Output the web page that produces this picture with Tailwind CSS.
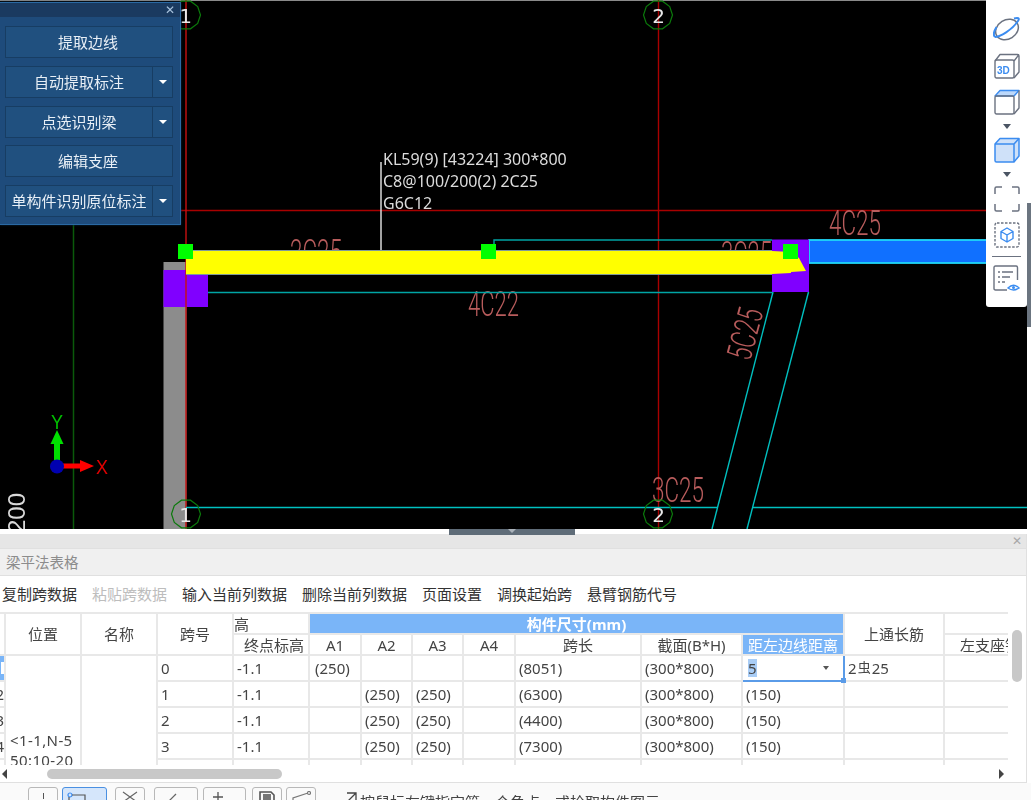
<!DOCTYPE html>
<html lang="zh-CN">
<head>
    <meta charset="UTF-8">
    <title>梁平法表格</title>
    <script src="https://cdn.jsdelivr.net/npm/@tailwindcss/browser@4"></script>
</head>
<body class="overflow-hidden bg-white">
<div class="flex flex-col h-[800px] w-[1031px] overflow-hidden blur-[0.35px] text-[15px] leading-5 text-[#333] font-['Noto_Sans','Noto_Sans_CJK_SC',sans-serif]">

    <!-- drawing canvas -->
    <div class="relative h-[529px] shrink-0 bg-white">
        <svg class="block bg-black" width="1027" height="529" viewBox="0 0 1027 529" xmlns="http://www.w3.org/2000/svg">
            <defs>
                <polygon id="axis-ring" fill="none" stroke="#0b7a0b" stroke-width="1.2" points="14.5,0 11.7,8.5 4.5,13.8 -4.5,13.8 -11.7,8.5 -14.5,0 -11.7,-8.5 -4.5,-13.8 4.5,-13.8 11.7,-8.5"/>
            </defs>
            <rect x="0" y="0" width="1027" height="1" fill="#8a8a8a"/>
            <line x1="73.5" y1="224" x2="73.5" y2="529" stroke="#0a5a0a" stroke-width="1.5"/>

            <!-- axis lines -->
            <line x1="180" y1="210.5" x2="986" y2="210.5" stroke="#a80000" stroke-width="1.4"/>
            <line x1="658.5" y1="0" x2="658.5" y2="529" stroke="#a80000" stroke-width="1.4"/>

            <!-- column and supports -->
            <rect x="163.5" y="262" width="23" height="267" fill="#8c8c8c"/>
            <rect x="163.5" y="270" width="23" height="37" fill="#8000ff"/>
            <rect x="186" y="273" width="22" height="34" fill="#8000ff"/>
            <line x1="186" y1="0" x2="186" y2="529" stroke="#c81010" stroke-width="1.4"/>

            <!-- labels under the beam -->
            <g fill="#b85c5c" font-family="Roboto, sans-serif" font-weight="300" font-size="35">
                <text x="290" y="264" textLength="52" lengthAdjust="spacingAndGlyphs">2C25</text>
                <text x="721" y="266" textLength="51" lengthAdjust="spacingAndGlyphs">3C25</text>
                <text x="468" y="316" textLength="51" lengthAdjust="spacingAndGlyphs">4C22</text>
                <text x="829" y="235" textLength="52" lengthAdjust="spacingAndGlyphs">4C25</text>
                <text x="652" y="502" textLength="52" lengthAdjust="spacingAndGlyphs">3C25</text>
                <text x="0" y="0" textLength="52" lengthAdjust="spacingAndGlyphs" transform="translate(750,362) rotate(-75)">5C25</text>
            </g>

            <!-- teal outlines -->
            <g stroke="#00c0c0" stroke-width="1.4" fill="none">
                <path d="M494 245V240H772" stroke="#00a4a4"/>
                <line x1="208" y1="292.5" x2="772" y2="292.5" stroke="#00a4a4"/>
                <line x1="186" y1="507.5" x2="718" y2="507.5"/>
                <line x1="753" y1="507.5" x2="1027" y2="507.5"/>
                <line x1="773" y1="292" x2="712" y2="529"/>
                <line x1="808.5" y1="292" x2="747" y2="529"/>
            </g>

            <!-- right beam -->
            <rect x="809" y="240" width="180" height="23" fill="#1070ff" stroke="#20d8f8" stroke-width="1.8"/>

            <!-- selected beam -->
            <rect x="772" y="239.5" width="37" height="52.5" fill="#8000ff"/>
            <rect x="186" y="250" width="586" height="25" fill="#7f9a9a"/>
            <polygon points="186,251 772,251 791,252 799,258 806,271 791,272 791,273 772,274 186,274" fill="#ffff00"/>
            <line x1="381" y1="162" x2="381" y2="250" stroke="#d8d8d8" stroke-width="1.5"/>
            <rect x="178" y="244" width="15" height="15" fill="#00ff00"/>
            <rect x="481" y="244" width="15" height="15" fill="#00ff00"/>
            <rect x="783" y="244" width="15" height="15" fill="#00ff00"/>

            <!-- beam annotation -->
            <g fill="#dcdcdc" font-family="'Noto Sans', sans-serif" font-size="16">
                <text x="383" y="165">KL59(9) [43224] 300*800</text>
                <text x="383" y="187">C8@100/200(2) 2C25</text>
                <text x="383" y="209">G6C12</text>
            </g>

            <!-- axis rings -->
            <use href="#axis-ring" x="186" y="15"/>
            <use href="#axis-ring" x="658" y="15"/>
            <use href="#axis-ring" x="186" y="514"/>
            <use href="#axis-ring" x="658" y="514"/>
            <g fill="#e8e8e8" font-family="'DejaVu Sans', sans-serif" font-size="20" text-anchor="middle">
                <text x="185.5" y="23">1</text>
                <text x="658.5" y="23">2</text>
                <text x="185.5" y="522">1</text>
                <text x="658.5" y="522">2</text>
            </g>

            <!-- UCS -->
            <rect x="54" y="442" width="6" height="20" fill="#00e000"/>
            <polygon points="57,430 63.5,444 50.5,444" fill="#00e000"/>
            <rect x="62" y="463.5" width="20" height="5" fill="#ff0000"/>
            <polygon points="94,466 80,460 80,472" fill="#ff0000"/>
            <circle cx="57" cy="466.5" r="7" fill="#0000b0"/>
            <text x="57" y="429" text-anchor="middle" fill="#00c000" font-family="'Liberation Sans', sans-serif" font-size="20" textLength="12" lengthAdjust="spacingAndGlyphs">Y</text>
            <text x="96" y="474" fill="#e00000" font-family="'Liberation Sans', sans-serif" font-size="20" textLength="12" lengthAdjust="spacingAndGlyphs">X</text>
            <text x="0" y="0" transform="translate(25,533) rotate(-90)" fill="#d8d8d8" font-family="'Liberation Sans', sans-serif" font-size="24">200</text>
        </svg>

        <!-- floating tool panel -->
        <div class="absolute left-0 top-[2px] w-[181px] h-[223px] bg-[#1e4b7b] border border-l-0 border-[#2a69a3] shadow-[0_0_2px_#0a2a4a] flex flex-col">
            <div class="h-[14px] bg-[#1a3a60] flex items-center justify-end pr-[5px] text-[#a9c4de] text-[12px] leading-none">✕</div>
            <div class="flex flex-col gap-[8px] pl-[5px] pr-[7px] pt-[9px] text-[15px] text-[#e8eff6]">
                <div class="h-[32px] flex items-center justify-center pr-[2px] bg-[#20507f] border border-[#173d63]">提取边线</div>
                <div class="h-[32px] flex bg-[#20507f] border border-[#173d63]">
                    <div class="flex-1 flex items-center justify-center">自动提取标注</div>
                    <div class="w-[20px] border-l border-[#173d63] flex items-center justify-center"><div class="w-0 h-0 border-x-[4px] border-x-transparent border-t-[4px] border-t-white"></div></div>
                </div>
                <div class="h-[32px] flex bg-[#20507f] border border-[#173d63]">
                    <div class="flex-1 flex items-center justify-center">点选识别梁</div>
                    <div class="w-[20px] border-l border-[#173d63] flex items-center justify-center"><div class="w-0 h-0 border-x-[4px] border-x-transparent border-t-[4px] border-t-white"></div></div>
                </div>
                <div class="h-[32px] -mt-px flex items-center justify-center pr-[2px] bg-[#20507f] border border-[#173d63]">编辑支座</div>
                <div class="h-[32px] flex bg-[#20507f] border border-[#173d63]">
                    <div class="flex-1 flex items-center justify-center">单构件识别原位标注</div>
                    <div class="w-[20px] border-l border-[#173d63] flex items-center justify-center"><div class="w-0 h-0 border-x-[4px] border-x-transparent border-t-[4px] border-t-white"></div></div>
                </div>
            </div>
        </div>

        <!-- view toolbar -->
        <div class="absolute left-[986px] top-0 w-[41px] h-[307px] bg-white rounded-b-[3px] flex flex-col items-center pt-[17px]">
            <svg width="28" height="25" viewBox="0 0 28 25" fill="none" stroke-width="1.5">
                <ellipse cx="14" cy="12.5" rx="12" ry="9.5" transform="rotate(-32 14 12.5)" stroke="#6b7280"/>
                <path d="M2 20C7 20 19 13 25 4C27 1 25 0.5 21 1.5" stroke="#3b8cf0" stroke-width="2"/>
                <path d="M2 20C0 18 1 14 3.5 10" stroke="#3b8cf0" stroke-width="2"/>
            </svg>
            <svg class="mt-[11px]" width="26" height="26" viewBox="0 0 26 26" fill="none" stroke="#6b7280" stroke-width="1.4" stroke-linejoin="round">
                <rect x="1" y="7" width="19" height="18" rx="1.5"/>
                <path d="M1 8L6 1.500H23.500Q25 1.500 25 3V19L20 25M20 8L25 1.500"/>
                <text x="3" y="21" fill="#3b8cf0" stroke="none" font-family="'Liberation Sans', sans-serif" font-weight="700" font-size="10">3D</text>
            </svg>
            <svg class="mt-[10px]" width="26" height="26" viewBox="0 0 26 26" fill="none" stroke="#6b7280" stroke-width="1.4" stroke-linejoin="round">
                <path d="M1 7L6 1.500H25L20 7Z" fill="#bcd8fb" stroke="#3b8cf0"/>
                <rect x="1" y="7" width="19" height="18" rx="1.5"/>
                <path d="M25 1.500V19L20 25"/>
            </svg>
            <div class="mt-[9px] w-0 h-0 border-x-[4px] border-x-transparent border-t-[5px] border-t-[#4b5563]"></div>
            <svg class="mt-[8px]" width="26" height="26" viewBox="0 0 26 26" fill="#cfe1f9" stroke="#3b8cf0" stroke-width="1.5" stroke-linejoin="round">
                <path d="M1 7L6 1.500H25V19L20 25H2.500Q1 25 1 23.500Z"/>
                <path d="M1 7H20V25M20 7L25 1.500" fill="none"/>
            </svg>
            <div class="mt-[9px] w-0 h-0 border-x-[4px] border-x-transparent border-t-[5px] border-t-[#4b5563]"></div>
            <svg class="mt-[9px]" width="26" height="26" viewBox="0 0 26 26" fill="none" stroke="#6b7280" stroke-width="1.5">
                <path d="M1 8V2.500Q1 1 2.500 1H8M18 1H23.500Q25 1 25 2.500V8M25 18V23.500Q25 25 23.500 25H18M8 25H2.500Q1 25 1 23.500V18"/>
            </svg>
            <svg class="mt-[10px]" width="26" height="26" viewBox="0 0 26 26" fill="none" stroke-width="1.4" stroke-linejoin="round">
                <rect x="1" y="1" width="24" height="24" rx="2" stroke="#6b7280" stroke-dasharray="2.500 1.500"/>
                <path d="M13 6L19 9.500V16.500L13 20L7 16.500V9.500ZM7 9.500L13 13L19 9.500M13 13V20" stroke="#3b8cf0"/>
            </svg>
            <div class="mt-[8px] w-[29px] h-px bg-[#6b7280]"></div>
            <svg class="mt-[8px]" width="27" height="27" viewBox="0 0 27 27" fill="none" stroke="#6b7280" stroke-width="1.4">
                <path d="M14 25H2.500Q1 25 1 23.500V2.500Q1 1 2.500 1H23Q24.500 1 24.500 2.500V15"/>
                <path d="M5 7H7M9 7H20M5 12H7M9 12H17M5 17H7M9 17H12"/>
                <path d="M15 23Q20.500 17.500 26 23Q20.500 27 15 23Z" stroke="#3b8cf0"/>
                <circle cx="20.500" cy="22.500" r="1.500" fill="#3b8cf0" stroke="none"/>
            </svg>
        </div>

        <!-- scroll handle at the window edge -->
        <div class="absolute left-[1027px] top-[203px] w-[4px] h-[124px] bg-[#6b7580]"></div>
    </div>

    <!-- splitter -->
    <div class="h-[5px] shrink-0 bg-white flex justify-center">
        <div class="relative left-[-4px] w-[126px] h-[6px] bg-[#5f6c78] flex justify-center z-10">
            <div class="w-0 h-0 border-x-[4px] border-x-transparent border-t-[4px] border-t-[#aab2ba]"></div>
        </div>
    </div>

    <div class="w-[1027px] shrink-0 border-r border-[#e0e0e0]">
        <!-- panel head -->
        <div class="h-[14px] bg-[#e6e6e6] flex items-center justify-end pr-[4px] text-[#a8a8a8] text-[12px] leading-none">✕</div>
        <div class="h-[28px] bg-[#f0f0f0] border-t border-b border-[#e0e0e0] flex items-center pl-[6px] text-[14.5px] text-[#8c8c8c]">梁平法表格</div>

        <!-- table actions -->
        <div class="h-[36px] bg-white flex items-center gap-[15px] pl-[2px] whitespace-nowrap">
            <span>复制跨数据</span>
            <span class="text-[#bdbdbd]">粘贴跨数据</span>
            <span>输入当前列数据</span>
            <span>删除当前列数据</span>
            <span>页面设置</span>
            <span>调换起始跨</span>
            <span>悬臂钢筋代号</span>
        </div>

        <!-- table: its first column is scrolled almost out of view -->
        <div class="relative h-[153px] overflow-hidden">
            <div class="w-[1008px] h-[153px] overflow-hidden">
                <table class="table-fixed border-collapse -ml-[10px] w-[1053px] leading-[18px] text-[#444] [&_td]:border-2 [&_td]:border-[#e8e8e8] [&_th]:border-2 [&_th]:border-[#e8e8e8] [&_th]:font-normal [&_td]:px-[3px] [&_td]:py-0 [&_th]:p-0">
                    <colgroup>
                        <col class="w-[14px]"><col class="w-[76px]"><col class="w-[76px]"><col class="w-[76px]"><col class="w-[76px]"><col class="w-[52px]"><col class="w-[51px]"><col class="w-[51px]"><col class="w-[52px]"><col class="w-[126px]"><col class="w-[101px]"><col class="w-[102px]"><col class="w-[100px]"><col class="w-[100px]">
                    </colgroup>
                    <thead>
                        <tr class="h-[21px]">
                            <th rowspan="2"></th>
                            <th rowspan="2">位置</th>
                            <th rowspan="2">名称</th>
                            <th rowspan="2">跨号</th>
                            <th class="text-left">高</th>
                            <th colspan="7" class="bg-[#7ab5f8] text-white !font-bold text-center">构件尺寸(mm)</th>
                            <th rowspan="2">上通长筋</th>
                            <th></th>
                        </tr>
                        <tr class="h-[21px]">
                            <th class="!pl-[6px]">终点标高</th>
                            <th>A1</th>
                            <th>A2</th>
                            <th>A3</th>
                            <th>A4</th>
                            <th>跨长</th>
                            <th>截面(B*H)</th>
                            <th class="bg-[#7ab5f8] text-white">距左边线距离</th>
                            <th class="!pl-[15px] text-left whitespace-nowrap overflow-hidden">左支座钢筋</th>
                        </tr>
                    </thead>
                    <tbody>
                        <tr class="h-[26px]">
                            <td class="!p-0 bg-[#7ab5f8]"><div class="w-[3px] h-[12px] bg-white ml-auto"></div></td>
                            <td rowspan="5" class="align-top !pt-[74px] !px-[4px] leading-5 tracking-[0.4px] whitespace-nowrap overflow-hidden">&lt;1-1,N-5<br>50:10-20</td>
                            <td rowspan="5"></td>
                            <td>0</td><td>-1.1</td><td class="!pl-[5px]">(250)</td><td></td><td></td><td></td><td>(8051)</td><td>(300*800)</td>
                            <td class="relative !p-0 !border-[#5a9be8]">
                                <div class="flex items-center justify-between pl-[5px] pr-[14px]"><span class="bg-[#a9cdf6] leading-[18px]">5</span><span class="w-0 h-0 border-x-[3px] border-x-transparent border-t-[4px] border-t-[#555]"></span></div>
                                <div class="absolute right-[-3px] bottom-[-3px] w-[5px] h-[5px] bg-[#5a9be8]"></div>
                            </td>
                            <td class="whitespace-nowrap">2<span class="relative top-[-2px] text-[13px] mx-[1px]">虫</span>25</td><td></td>
                        </tr>
                        <tr class="h-[26px]">
                            <td class="!p-0 text-right">2</td>
                            <td>1</td><td>-1.1</td><td></td><td>(250)</td><td>(250)</td><td></td><td>(6300)</td><td>(300*800)</td><td>(150)</td><td></td><td></td>
                        </tr>
                        <tr class="h-[26px]">
                            <td class="!p-0 text-right">3</td>
                            <td>2</td><td>-1.1</td><td></td><td>(250)</td><td>(250)</td><td></td><td>(4400)</td><td>(300*800)</td><td>(150)</td><td></td><td></td>
                        </tr>
                        <tr class="h-[26px]">
                            <td class="!p-0 text-right">4</td>
                            <td>3</td><td>-1.1</td><td></td><td>(250)</td><td>(250)</td><td></td><td>(7300)</td><td>(300*800)</td><td>(150)</td><td></td><td></td>
                        </tr>
                        <tr class="h-[26px]">
                            <td class="!p-0"></td>
                            <td></td><td></td><td></td><td></td><td></td><td></td><td></td><td></td><td></td><td></td><td></td>
                        </tr>
                    </tbody>
                </table>
            </div>
            <!-- vertical scrollbar overlays the table edge -->
            <div class="absolute left-[1012px] top-[18px] w-[10px] h-[52px] rounded-full bg-[#c8c8c8]"></div>
        </div>

        <!-- horizontal scrollbar -->
        <div class="h-[18px] bg-white border-b border-[#e0e0e0] flex items-center">
            <div class="ml-[2px] w-0 h-0 border-y-[5px] border-y-transparent border-r-[5px] border-r-[#444]"></div>
            <div class="ml-[40px] w-[235px] h-[10px] rounded-full bg-[#c8c8c8]"></div>
            <div class="ml-[717px] w-0 h-0 border-y-[5px] border-y-transparent border-l-[5px] border-l-[#444]"></div>
        </div>
    </div>

    <!-- status toolbar, cut off by the window -->
    <div class="flex-1 bg-[#fafafa] flex items-start pt-[4px] pl-[28px] overflow-hidden">
        <div class="w-[30px] h-[24px] rounded-[3px] border border-[#b8b8b8] flex justify-center text-[#555]"><div class="w-px h-[6px] mt-[5px] bg-[#555]"></div></div>
        <div class="ml-[4px] w-[45px] h-[24px] rounded-[3px] border border-[#4a90e2] bg-[#d5e6fb] flex pl-[4px] pt-[4px]">
            <svg width="20" height="10" viewBox="0 0 20 10" fill="none" stroke="#555" stroke-width="1.2"><circle cx="3" cy="3" r="2" stroke="#3b8cf0"/><path d="M5 3H18V10M2 5V10"/></svg>
        </div>
        <div class="ml-[8px] w-[30px] h-[24px] rounded-[3px] border border-[#b8b8b8] flex justify-center pt-[3px]">
            <svg width="16" height="10" viewBox="0 0 16 10" fill="none" stroke="#666" stroke-width="1.2"><path d="M1 1L15 11M15 1L1 11"/></svg>
        </div>
        <div class="ml-[9px] w-[44px] h-[24px] rounded-[3px] border border-[#b8b8b8] pl-[13px] pt-[5px]">
            <svg width="12" height="8" viewBox="0 0 12 8" fill="none" stroke="#666" stroke-width="1.2"><path d="M1 8L8 1"/></svg>
        </div>
        <div class="ml-[5px] w-[43px] h-[24px] rounded-[3px] border border-[#b8b8b8] pl-[8px] pt-[4px]">
            <svg width="12" height="10" viewBox="0 0 12 10" fill="none" stroke="#555" stroke-width="1.3"><path d="M6 0V10M1 5H11"/></svg>
        </div>
        <div class="ml-[6px] w-[30px] h-[24px] rounded-[3px] border border-[#b8b8b8] flex justify-center pt-[3px]">
            <svg width="16" height="10" viewBox="0 0 16 10" fill="none" stroke="#555" stroke-width="1.6"><path d="M1 1H12L15 4V12H1Z"/><rect x="4" y="3" width="8" height="7" fill="#777" stroke="none"/></svg>
        </div>
        <div class="ml-[4px] w-[30px] h-[24px] rounded-[3px] border border-[#b8b8b8] flex justify-center pt-[3px]">
            <svg width="20" height="10" viewBox="0 0 20 10" fill="none" stroke="#777" stroke-width="1.2"><path d="M2 9V7L17 2"/><circle cx="18" cy="2" r="1.500"/></svg>
        </div>
        <svg class="ml-[29px] mt-[5px] shrink-0" width="12" height="12" viewBox="0 0 12 12" fill="none" stroke="#444" stroke-width="1.3"><path d="M2 1H11V10M11 1L1 11"/></svg>
        <span class="ml-[3px] mt-[5px] whitespace-nowrap text-[#444]">按鼠标左键指定第一个角点，或拾取构件图元</span>
    </div>
</div>
</body>
</html>
